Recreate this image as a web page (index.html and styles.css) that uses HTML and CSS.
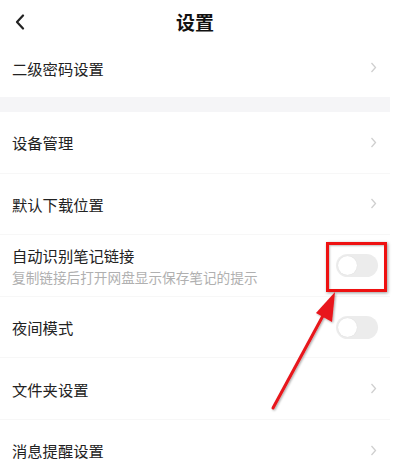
FILE: index.html
```html
<!DOCTYPE html>
<html lang="zh">
<head>
<meta charset="utf-8">
<link rel="stylesheet" href="styles.css">
</head>
<body>
<div class="page">
  <header class="header">
    <svg class="back" width="12" height="16" viewBox="0 0 12 16"><path d="M9 1.5 L3 8 L9 14.5" fill="none" stroke="#222" stroke-width="2.2" stroke-linecap="round" stroke-linejoin="round"/></svg>
    <h1 class="title">设置</h1>
  </header>
  <div class="row first">
    <span class="label">二级密码设置</span>
    <svg class="chev" width="7" height="11" viewBox="0 0 7 11"><path d="M1.5 1 L5.5 5.5 L1.5 10" fill="none" stroke="#cfcfcf" stroke-width="1.3"/></svg>
  </div>
  <div class="band"></div>
  <div class="row">
    <span class="label">设备管理</span>
    <svg class="chev" width="7" height="11" viewBox="0 0 7 11"><path d="M1.5 1 L5.5 5.5 L1.5 10" fill="none" stroke="#cfcfcf" stroke-width="1.3"/></svg>
  </div>
  <div class="row">
    <span class="label">默认下载位置</span>
    <svg class="chev" width="7" height="11" viewBox="0 0 7 11"><path d="M1.5 1 L5.5 5.5 L1.5 10" fill="none" stroke="#cfcfcf" stroke-width="1.3"/></svg>
  </div>
  <div class="row">
    <div class="texts">
      <span class="label">自动识别笔记链接</span>
      <span class="sub">复制链接后打开网盘显示保存笔记的提示</span>
    </div>
    <span class="toggle"><span class="knob"></span></span>
  </div>
  <div class="row">
    <span class="label">夜间模式</span>
    <span class="toggle"><span class="knob"></span></span>
  </div>
  <div class="row">
    <span class="label">文件夹设置</span>
    <svg class="chev" width="7" height="11" viewBox="0 0 7 11"><path d="M1.5 1 L5.5 5.5 L1.5 10" fill="none" stroke="#cfcfcf" stroke-width="1.3"/></svg>
  </div>
  <div class="row last">
    <span class="label">消息提醒设置</span>
    <svg class="chev" width="7" height="11" viewBox="0 0 7 11"><path d="M1.5 1 L5.5 5.5 L1.5 10" fill="none" stroke="#cfcfcf" stroke-width="1.3"/></svg>
  </div>
  <div class="highlight"></div>
  <svg class="arrow" width="413" height="470" viewBox="0 0 413 470">
    <defs>
      <filter id="sh" x="-20%" y="-20%" width="140%" height="140%">
        <feDropShadow dx="1" dy="1" stdDeviation="1" flood-color="#000" flood-opacity="0.35"/>
      </filter>
    </defs>
    <g filter="url(#sh)">
      <line x1="273" y1="408" x2="325" y2="312" stroke="#e8141a" stroke-width="3" stroke-linecap="round"/>
      <polygon points="335,292 332,322 316,313" fill="#e8141a"/>
    </g>
  </svg>
</div>
</body>
</html>
```
FILE: styles.css
```css
html, body {
  margin: 0;
  padding: 0;
  background: #fff;
}
body {
  font-family: "Noto Sans CJK SC", "Noto Sans", sans-serif;
  color: #222;
  overflow: hidden;
}
.page {
  position: relative;
  width: 390px;
  height: 470px;
  display: flex;
  flex-direction: column;
  overflow: visible;
}
.header {
  height: 38px;
  flex: none;
  display: flex;
  align-items: center;
  justify-content: center;
  position: relative;
}
.back {
  position: absolute;
  left: 14px;
  top: 14px;
}
.title {
  margin: 0;
  font-size: 19px;
  font-weight: 700;
  line-height: 1;
  color: #111;
  padding-top: 4px;
}
.row {
  flex: none;
  height: 60.6px;
  display: flex;
  align-items: center;
  justify-content: space-between;
  padding: 0 12px 0 12px;
  border-bottom: 1px solid #f7f7f7;
}
.row.first {
  height: 59px;
  border-bottom: none;
}
.row.last {
  border-bottom: none;
}
.band {
  flex: none;
  height: 15px;
  background: #f5f5f7;
}
.label {
  font-size: 15.3px;
  line-height: 20px;
  color: #222;
}
.texts {
  display: flex;
  flex-direction: column;
  gap: 2px;
  padding-top: 2px;
}
.sub {
  font-size: 13.65px;
  line-height: 20px;
  color: #b0b0b0;
}
.chev {
  margin-right: 1px;
}
.toggle {
  width: 42px;
  height: 23px;
  border-radius: 12px;
  background: #ececec;
  position: relative;
  display: flex;
  align-items: center;
  padding-left: 2px;
  box-sizing: border-box;
}
.knob {
  width: 19px;
  height: 19px;
  border-radius: 50%;
  background: #fff;
  box-shadow: 0 0 1px rgba(0,0,0,0.12);
}
.highlight {
  position: absolute;
  left: 326px;
  top: 242px;
  width: 61px;
  height: 50px;
  box-sizing: border-box;
  border: 3px solid #ee1111;
  box-shadow: 1px 1px 3px rgba(0,0,0,0.4), inset 1px 1px 2px rgba(0,0,0,0.25);
}
.arrow {
  position: absolute;
  left: 0;
  top: 0;
  pointer-events: none;
}
```
